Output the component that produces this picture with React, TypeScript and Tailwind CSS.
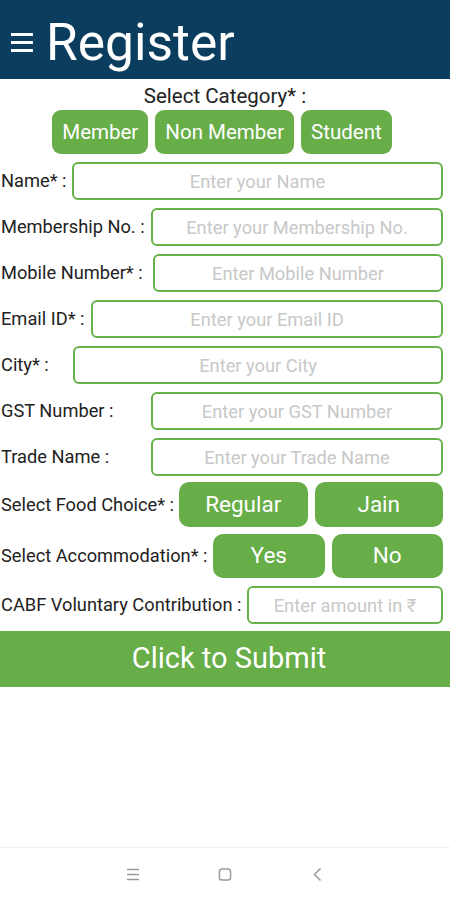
import type { ReactNode } from "react";

const GREEN = "bg-[#67ad48]";

function Field({ label, width, placeholder, className = "" }: { label: string; width: string; placeholder: string; className?: string }) {
  return (
    <div className={`flex h-[38px] items-center ${className}`}>
      <span className={`${width} shrink-0 whitespace-nowrap text-[18.25px] text-[#222]`}>{label}</span>
      <input
        placeholder={placeholder}
        className="h-[38px] min-w-0 flex-1 rounded-[6px] border-2 border-[#66b14a] bg-white text-center text-[18.3px] outline-none placeholder:text-[#c8c8c8]"
      />
    </div>
  );
}

function ChoiceRow({ label, width, options, className = "" }: { label: string; width: string; options: string[]; className?: string }) {
  return (
    <div className={`flex items-center ${className}`}>
      <span className={`${width} shrink-0 whitespace-nowrap text-[18.25px] text-[#222]`}>{label}</span>
      <div className="flex h-full flex-1 gap-[7px]">
        {options.map((o) => (
          <button key={o} className={`h-full flex-1 rounded-[10px] ${GREEN} text-[22.5px] text-white`}>
            {o}
          </button>
        ))}
      </div>
    </div>
  );
}

function NavIcon({ children }: { children: ReactNode }) {
  return <div className="flex h-[16px] w-[14px] items-center justify-center">{children}</div>;
}

export default function App() {
  return (
    <div className="flex h-[900px] flex-col bg-white font-[Roboto,sans-serif]">
      <header className="flex h-[79px] shrink-0 items-center bg-[#0b3d5e] pl-[11px] pt-[6px]">
        <div className="flex w-[22px] flex-col gap-[5px]">
          <span className="h-[3px] bg-white" />
          <span className="h-[3px] bg-white" />
          <span className="h-[3px] bg-white" />
        </div>
        <h1 className="ml-[13px] text-[51.5px] leading-none text-white">Register</h1>
      </header>

      <div className="mt-[5px] text-center text-[20.5px] leading-[24px] text-[#222]">Select Category* :</div>
      <div className="mt-[2px] flex justify-center gap-[7px] pr-[6px]">
        {["Member", "Non Member", "Student"].map((c) => (
          <button key={c} className={`h-[44px] rounded-[9px] ${GREEN} px-[10px] text-[20.5px] text-white`}>
            {c}
          </button>
        ))}
      </div>

      <div className="mt-[8px] flex flex-col pl-[1px] pr-[7px]">
        <Field label="Name* :" width="w-[71px]" placeholder="Enter your Name" />
        <Field label="Membership No. :" width="w-[150px]" placeholder="Enter your Membership No." className="mt-[8px]" />
        <Field label="Mobile Number* :" width="w-[152px]" placeholder="Enter Mobile Number" className="mt-[8px]" />
        <Field label="Email ID* :" width="w-[90px]" placeholder="Enter your Email ID" className="mt-[8px]" />
        <Field label="City* :" width="w-[72px]" placeholder="Enter your City" className="mt-[8px]" />
        <Field label="GST Number :" width="w-[150px]" placeholder="Enter your GST Number" className="mt-[8px]" />
        <Field label="Trade Name :" width="w-[150px]" placeholder="Enter your Trade Name" className="mt-[8px]" />
        <ChoiceRow label="Select Food Choice* :" width="w-[178px]" options={["Regular", "Jain"]} className="mt-[6px] h-[45px]" />
        <ChoiceRow label="Select Accommodation* :" width="w-[212px]" options={["Yes", "No"]} className="mt-[7px] h-[44px]" />
        <Field label="CABF Voluntary Contribution :" width="w-[246px]" placeholder="Enter amount in ₹" className="mt-[8px]" />
      </div>

      <button className={`mt-[7px] h-[56px] w-full ${GREEN} pl-[8px] text-[29px] text-white`}>Click to Submit</button>

      <nav className="mt-auto flex h-[53px] items-center justify-center gap-[78px] border-t border-[#f0f0f0]">
        <NavIcon>
          <svg width="14" height="13" viewBox="0 0 14 13" fill="none" stroke="#9a9a9a" strokeWidth="1.5">
            <path d="M1 1.5h12M1 6.5h12M1 11.5h12" />
          </svg>
        </NavIcon>
        <NavIcon>
          <svg width="15" height="15" viewBox="0 0 15 15" fill="none" stroke="#9a9a9a" strokeWidth="1.6">
            <rect x="1.5" y="1.5" width="12" height="12" rx="3" />
          </svg>
        </NavIcon>
        <NavIcon>
          <svg width="9" height="15" viewBox="0 0 9 15" fill="none" stroke="#9a9a9a" strokeWidth="1.5">
            <path d="M7.5 1.5 1.5 7.5l6 6" />
          </svg>
        </NavIcon>
      </nav>
    </div>
  );
}
